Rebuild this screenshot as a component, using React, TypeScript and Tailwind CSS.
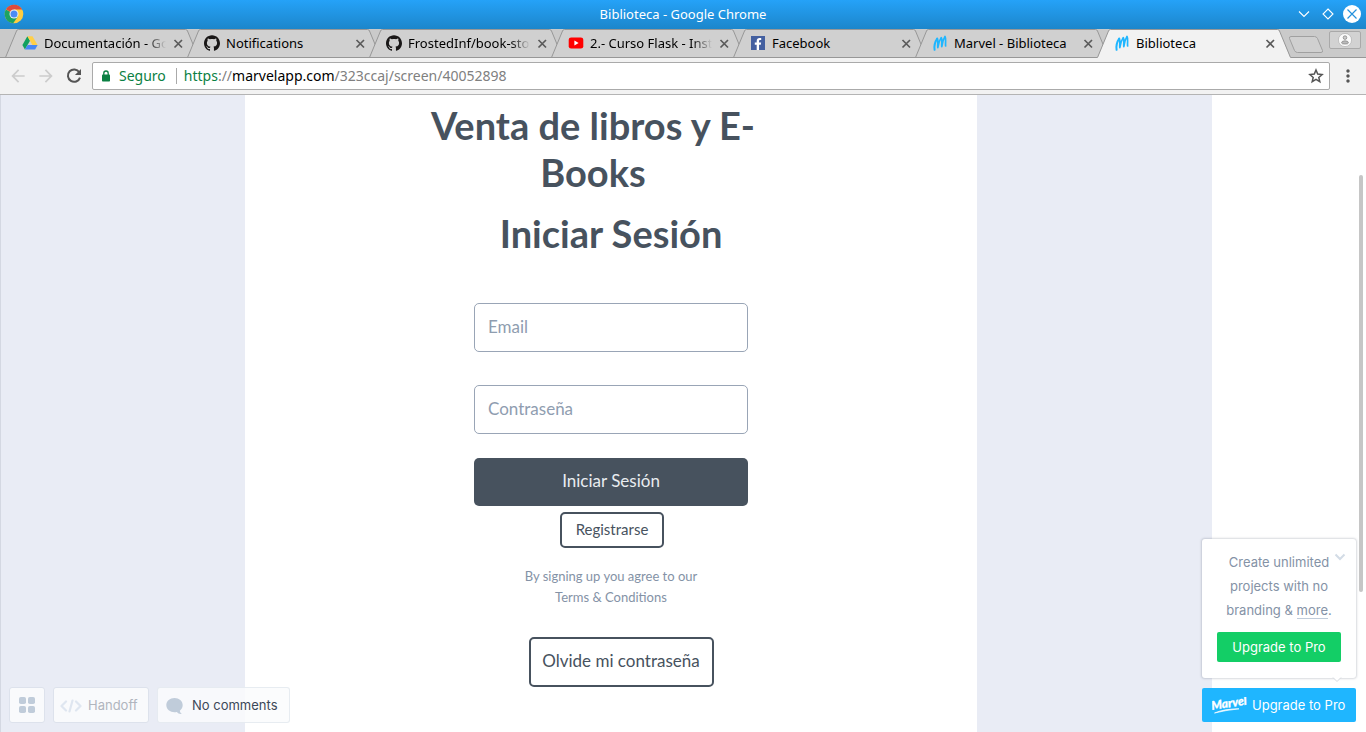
import React from "react";
import { SiGithub } from "react-icons/si";
import { FaFacebookF } from "react-icons/fa";
import { MdArrowBack, MdArrowForward, MdMoreVert } from "react-icons/md";

function ChromeIcon() {
  return (
    <svg viewBox="0 0 20 20" className="size-5" aria-hidden="true">
      <circle cx="10" cy="10" r="9.3" fill="#ffcd40" />
      <path d="M10 10 L1.9 5.4 A9.3 9.3 0 0 0 9.2 19.3 L14 12.3 Z" fill="#1da362" />
      <path d="M10 10 L2 5.3 A9.3 9.3 0 0 1 18.2 5.6 H10 Z" fill="#de4b3c" />
      <circle cx="10" cy="10" r="4.5" fill="#f1f1f1" />
      <circle cx="10" cy="10" r="3.5" fill="#4c8bf5" />
    </svg>
  );
}

function DriveIcon() {
  return (
    <svg viewBox="0 0 16 16" className="size-4" aria-hidden="true">
      <path d="M5.4 1.2 L0.4 9.9 L2.9 14.6 L8 5.8 Z" fill="#11a05e" />
      <path d="M5.4 1.2 H10.5 L15.6 9.9 H10.4 Z" fill="#ffcf48" />
      <path d="M5.6 9.9 H15.6 L13.1 14.6 H2.9 Z" fill="#4687f4" />
    </svg>
  );
}

function YoutubeIcon() {
  return (
    <svg viewBox="0 0 16 16" className="size-4" aria-hidden="true">
      <rect x="0.7" y="2.4" width="14.6" height="11.2" rx="2.4" fill="#f00" />
      <path d="M6.4 5.6 V10.4 L10.6 8 Z" fill="#fff" />
    </svg>
  );
}

function FacebookIcon() {
  return (
    <span className="flex size-[14px] items-end justify-end overflow-hidden bg-[#4460a0] pr-px text-white">
      <FaFacebookF size={12} />
    </span>
  );
}

function MarvelIcon() {
  return (
    <svg viewBox="0 0 16 16" className="size-4" fill="none" stroke="#1fb6ff" strokeLinecap="round" strokeLinejoin="round" aria-hidden="true">
      <path d="M2.6 14.8 C2 11 3.2 6.6 5.2 3.6" strokeWidth="2" />
      <path d="M5.2 3.6 C6.6 4.6 5.4 9 5.8 12.6 C6.4 8.6 7.6 5 9.2 2.6 C10.6 4 9.4 8 9.8 11.6 C10.4 7.6 11.4 4 13 1.4 C14.4 3.4 13.2 7 13.6 11" strokeWidth="1.7" />
    </svg>
  );
}

type TabInfo = { title: string; icon: React.ReactNode };

const tabs: TabInfo[] = [
  { title: "Documentación - Google Drive", icon: <DriveIcon /> },
  { title: "Notifications", icon: <SiGithub size={16} /> },
  { title: "FrostedInf/book-store", icon: <SiGithub size={16} /> },
  { title: "2.- Curso Flask - Instalación", icon: <YoutubeIcon /> },
  { title: "Facebook", icon: <FacebookIcon /> },
  { title: "Marvel - Biblioteca", icon: <MarvelIcon /> },
  { title: "Biblioteca", icon: <MarvelIcon /> },
];

const LONG_TITLE = 20;

function Tab({ title, icon, active }: TabInfo & { active: boolean }) {
  return (
    <li className={active ? "relative z-10 -mr-3 h-[29px] w-[194px] min-w-0" : "relative -mr-3 h-[29px] w-[194px] min-w-0"}>
      <svg viewBox="0 0 194 29" preserveAspectRatio="none" className="absolute inset-0 size-full" aria-hidden="true">
        <path
          d={active ? "M0 29 L1 28 L11.5 2 Q12 0.5 13.5 0.5 H180.5 Q182 0.5 182.5 2 L193 28 L194 29 Z" : "M0.5 28.5 L11.5 2 Q12 0.5 13.5 0.5 H180.5 Q182 0.5 182.5 2 L193.5 28.5"}
          fill={active ? "#f2f2f2" : "#d0d0d0"}
        />
        <path d="M0.5 28.5 L11.5 2 Q12 0.5 13.5 0.5 H180.5 Q182 0.5 182.5 2 L193.5 28.5" fill="none" stroke="#979797" />
        {!active && <path d="M0 28.5 H194" stroke="#979797" />}
      </svg>
      <div className="relative flex h-7 items-center pl-[17px]">
        <span className="flex size-4 shrink-0 items-center justify-center text-[#191717]">{icon}</span>
        <a
          href="#"
          className={
            title.length > LONG_TITLE
              ? "ml-1.5 w-[122px] shrink-0 overflow-hidden [mask-image:linear-gradient(to_right,black_84%,transparent)] text-[13px] leading-5 whitespace-nowrap text-black"
              : "ml-1.5 w-[122px] shrink-0 overflow-hidden text-[13px] leading-5 whitespace-nowrap text-black"
          }
        >
          {title}
        </a>
        <button type="button" aria-label={"Cerrar " + title} className="ml-1.5 flex size-3 items-center justify-center">
          <svg viewBox="0 0 12 12" className="size-3" stroke="#5a5a5a" strokeWidth="1.7" aria-hidden="true">
            <path d="M2.5 3 L10 10.5 M10 3 L2.5 10.5" />
          </svg>
        </button>
      </div>
    </li>
  );
}

function TitleBar() {
  return (
    <header className="relative flex h-[29px] shrink-0 items-center justify-between bg-linear-to-b from-[#25a2f8] to-[#1c86cb] pr-[5px] pb-px pl-1">
      <ChromeIcon />
      <h1 className="absolute inset-x-0 text-center text-[13px] leading-5 text-white">Biblioteca - Google Chrome</h1>
      <div className="relative flex items-center gap-1.5">
        <button type="button" aria-label="Minimizar">
          <svg viewBox="0 0 18 18" className="size-[18px]" fill="none" stroke="#fff" strokeWidth="1.1" aria-hidden="true">
            <path d="M4 6.5 L9 11.5 L14 6.5" />
          </svg>
        </button>
        <button type="button" aria-label="Maximizar">
          <svg viewBox="0 0 18 18" className="size-[18px]" fill="none" stroke="#fff" strokeWidth="1.1" aria-hidden="true">
            <path d="M9 4 L14 9 L9 14 L4 9 Z" />
          </svg>
        </button>
        <button type="button" aria-label="Cerrar">
          <svg viewBox="0 0 18 18" className="size-[18px]" aria-hidden="true">
            <circle cx="9" cy="9" r="9" fill="#fff" />
            <path d="M4.5 4.5 L13.5 13.5 M13.5 4.5 L4.5 13.5" stroke="#2491dc" strokeWidth="1.2" />
          </svg>
        </button>
      </div>
    </header>
  );
}

function TabStrip() {
  return (
    <nav className="flex h-[29px] shrink-0 items-start bg-[#cacaca] bg-[linear-gradient(#979797,#979797)] bg-[length:100%_1px] bg-bottom bg-no-repeat pl-[5px]">
      <ul className="flex min-w-0">
        {tabs.map((tab, i) => (
          <Tab key={i} {...tab} active={i === tabs.length - 1} />
        ))}
      </ul>
      <button type="button" aria-label="Nueva pestaña" className="mt-[7px] ml-[9px] shrink-0">
        <svg viewBox="0 0 36 18" className="h-[18px] w-9" aria-hidden="true">
          <path d="M3 0.5 H26.5 Q28.5 0.5 29.5 2.5 L34.5 14.5 Q35 16.5 33 16.5 H9.5 Q7.5 16.5 6.5 14.5 L1.5 2.5 Q1 0.5 3 0.5 Z" fill="#d0d0d0" stroke="#a0a0a0" />
        </svg>
      </button>
      <button type="button" aria-label="Perfil" className="mt-0.5 mr-[5px] ml-auto flex h-[18px] w-8 shrink-0 items-center justify-center rounded-xs border border-[#a9a9a9] bg-[#d2d2d2]">
        <svg viewBox="0 0 14 14" className="size-[14px]" aria-hidden="true">
          <circle cx="7" cy="7" r="6.6" fill="#fafafa" stroke="#aaa" strokeWidth="0.6" />
          <circle cx="7" cy="4.6" r="1.8" fill="#ccc" stroke="#888" strokeWidth="0.8" />
          <path d="M3.6 10 Q3.6 7.8 7 7.8 Q10.4 7.8 10.4 10 Q10.4 11 7 11 Q3.6 11 3.6 10 Z" fill="#bbb" stroke="#888" strokeWidth="0.8" />
        </svg>
      </button>
    </nav>
  );
}

function Toolbar() {
  return (
    <div className="flex h-[37px] shrink-0 items-center border-b border-[#b4b4b4] bg-[#f2f2f2] pl-2">
      <button type="button" aria-label="Atrás" className="text-[#cccccc]"><MdArrowBack size={20} /></button>
      <button type="button" aria-label="Adelante" className="ml-2 text-[#cccccc]"><MdArrowForward size={20} /></button>
      <button type="button" aria-label="Recargar" className="ml-2">
        <svg viewBox="0 0 20 20" className="size-5" aria-hidden="true">
          <path d="M15.3 6.2 A6.2 6.2 0 1 0 16 11.6" fill="none" stroke="#555" strokeWidth="2" />
          <path d="M17 2.9 V9 H10.9 Z" fill="#555" />
        </svg>
      </button>
      <div className="ml-2 flex h-7 min-w-0 flex-1 items-center rounded-xs border border-[#aaa] bg-white pr-1 pl-2 text-sm leading-5">
        <svg viewBox="0 0 10 12" className="h-3 w-2.5 shrink-0" aria-hidden="true">
          <rect x="1" y="4.5" width="8" height="7" rx="0.8" fill="#0b8043" />
          <path d="M2.8 5 V3.2 A2.2 2.2 0 0 1 7.2 3.2 V5" fill="none" stroke="#0b8043" strokeWidth="1.3" />
        </svg>
        <span className="ml-2 text-[#0b8043]">Seguro</span>
        <span className="ml-2.5 h-4 w-px bg-[#aaa]" />
        <a href="#" className="ml-[7px] min-w-0 flex-1 truncate text-[#808080]">
          <span className="text-[#0b8043]">https</span>://<span className="text-black">marvelapp.com</span>/323ccaj/screen/40052898
        </a>
        <button type="button" aria-label="Marcador">
          <svg viewBox="0 0 18 18" className="size-[18px]" fill="none" stroke="#555" strokeWidth="1.5" strokeLinejoin="miter" aria-hidden="true">
            <path d="M9 3 L10.7 7.1 L15.1 7.5 L11.8 10.4 L12.8 14.7 L9 12.4 L5.2 14.7 L6.2 10.4 L2.9 7.5 L7.3 7.1 Z" />
          </svg>
        </button>
      </div>
      <button type="button" aria-label="Menú" className="mr-2 ml-2 text-[#555]"><MdMoreVert size={20} /></button>
    </div>
  );
}

function LoginForm() {
  return (
    <form className="flex flex-col items-center font-[Lato,sans-serif] text-[#47525e]" onSubmit={(e) => e.preventDefault()}>
      <h2 className="mt-[7px] mr-9 w-[340px] text-center text-[38px] leading-[47px] font-bold">Venta de libros y E-Books</h2>
      <h2 className="mt-3.5 text-center text-[38px] leading-[47px] font-bold">Iniciar Sesión</h2>
      <input
        type="email"
        aria-label="Email"
        placeholder="Email"
        className="mt-[46px] h-[49px] w-[274px] rounded-[5px] border border-[#99a5b6] bg-white px-[13px] pb-0.5 text-[17px] placeholder:text-[#8f9db0] placeholder:opacity-100"
      />
      <input
        type="password"
        aria-label="Contraseña"
        placeholder="Contraseña"
        className="mt-[33px] h-[49px] w-[274px] rounded-[5px] border border-[#99a5b6] bg-white px-[13px] pb-0.5 text-[17px] placeholder:text-[#8f9db0] placeholder:opacity-100"
      />
      <button type="submit" className="mt-6 h-12 w-[274px] rounded-[5px] bg-[#47525e] pb-0.5 text-[17px] text-[#e9ecf0]">Iniciar Sesión</button>
      <button type="button" className="mt-1.5 ml-0.5 h-9 w-[104px] rounded-[5px] border-2 border-[#47525e] pb-0.5 text-[15px]">Registrarse</button>
      <p className="mt-[18px] w-[190px] text-center text-[13px] leading-[21px] text-[#8492a6]">By signing up you agree to our Terms &amp; Conditions</p>
      <button type="button" className="mt-[29px] mb-11 ml-5 h-[50px] w-[185px] rounded-[5px] border-2 border-[#47525e] pb-0.5 text-[17px]">Olvide mi contraseña</button>
    </form>
  );
}

function ViewerTools() {
  return (
    <div className="absolute bottom-[9px] left-[9px] flex gap-2 font-[Inter,sans-serif] text-[13px]">
      <button type="button" aria-label="Pantallas" className="flex size-9 items-center justify-center rounded-[3px] border border-[#dde2ec] bg-[#f9fafc]">
        <svg viewBox="0 0 16 16" className="size-4" fill="#c0ccda" aria-hidden="true">
          <rect width="7" height="7" rx="1.8" />
          <rect x="9" width="7" height="7" rx="1.8" />
          <rect y="9" width="7" height="7" rx="1.8" />
          <rect x="9" y="9" width="7" height="7" rx="1.8" />
        </svg>
      </button>
      <button type="button" className="flex h-9 w-24 items-center rounded-[3px] border border-[#dde2ec] bg-[#f9fafc] pt-0.5 pl-1.5 text-[#b0b5be]">
        <svg viewBox="0 0 22 14" className="mr-1.5 h-[14px] w-[22px]" fill="none" stroke="#dfe6f0" strokeWidth="2.2" strokeLinecap="round" strokeLinejoin="round" aria-hidden="true">
          <path d="M6 2.5 L1.5 7 L6 11.5 M12.5 1.5 L9.5 12.5 M16 2.5 L20.5 7 L16 11.5" />
        </svg>
        Handoff
      </button>
      <button type="button" className="flex h-9 w-[133px] items-center rounded-[3px] border border-[#d3dce6]/50 bg-[#fafbfd]/85 pt-0.5 pl-2 text-[#3c4858]">
        <svg viewBox="0 0 17 17" className="mr-[9px] size-[17px]" fill="#c0ccda" aria-hidden="true">
          <path d="M8.5 0 C13 0 16.7 3.1 16.7 7.1 C16.7 9.4 15.6 11.4 13.8 12.7 C14.1 14.1 14.8 15.3 16 15.9 C13.8 16.3 12 15.5 10.8 14 C5.5 15.1 0.3 12.3 0.3 7.1 C0.3 3.1 4 0 8.5 0 Z" />
        </svg>
        No comments
      </button>
    </div>
  );
}

function UpgradePanel() {
  return (
    <aside className="absolute right-[10px] bottom-[10px] w-[154px] font-[Inter,sans-serif] text-[13px]">
      <div className="relative mb-[10px] rounded-[3px] bg-white px-[15px] pt-[11px] pb-4 text-center shadow-[0_0_2px_1px_rgba(60,72,88,0.2)]">
        <p className="leading-6 text-[#8492a6]">
          Create unlimited projects with no branding &amp;{" "}
          <a href="#" className="border-b border-[#c0ccda]">more</a>.
        </p>
        <button type="button" aria-label="Ocultar" className="absolute top-3.5 right-2.5">
          <svg viewBox="0 0 12 8" className="h-2 w-3" fill="none" stroke="#d3dce6" strokeWidth="2" aria-hidden="true">
            <path d="M1.5 1.5 L6 6 L10.5 1.5" />
          </svg>
        </button>
        <button type="button" className="mt-2.5 h-[30px] w-full rounded-xs bg-[#13ce66] pt-0.5 text-white">Upgrade to Pro</button>
        <svg viewBox="0 0 10 6" className="absolute right-3.5 -bottom-[5px] h-1.5 w-2.5" aria-hidden="true">
          <path d="M1 0.5 L5 4.5 L9 0.5" fill="#fff" stroke="#d4d8de" />
        </svg>
      </div>
      <a href="#" className="flex h-[34px] items-center rounded-xs bg-[#1fb6ff] pt-0.5 pl-2.5 whitespace-nowrap text-white">
        <svg viewBox="0 0 36 18" className="mr-1 h-[18px] w-9 shrink-0" aria-hidden="true">
          <text x="0" y="13" transform="rotate(-9 0 13)" fill="#fff" stroke="#fff" strokeWidth="0.3" fontFamily="Lato, sans-serif" fontWeight="900" fontStyle="italic" fontSize="12">Marvel</text>
          <path d="M2.5 16 Q12 11.9 27 11.8 Q13 13.4 2.5 16 Z" fill="#fff" stroke="#fff" strokeWidth="0.7" />
        </svg>
        Upgrade to Pro
      </a>
    </aside>
  );
}

export default function App() {
  return (
    <div className="flex h-screen flex-col overflow-hidden bg-white font-['Noto_Sans',sans-serif]">
      <TitleBar />
      <TabStrip />
      <Toolbar />
      <main className="relative flex min-h-0 flex-1">
        <section className="flex min-w-0 flex-1 justify-center border-l border-[#d4d8e2] bg-[#e9ecf5] pl-[9px]">
          <div className="w-[732px] bg-white">
            <LoginForm />
          </div>
        </section>
        <div className="w-[154px] shrink-0" />
        <div className="absolute top-20 right-[3px] h-[417px] w-1 rounded-full bg-[#c6c6c6]" />
        <ViewerTools />
        <UpgradePanel />
      </main>
    </div>
  );
}
